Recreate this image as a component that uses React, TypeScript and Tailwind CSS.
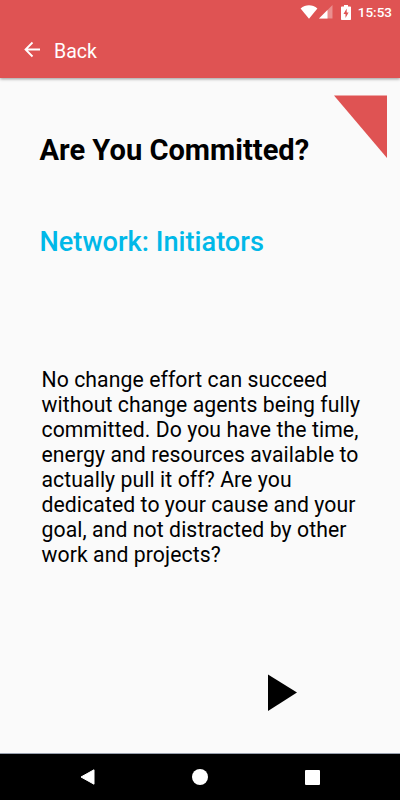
const body = [
  "No change effort can succeed",
  "without change agents being fully",
  "committed. Do you have the time,",
  "energy and resources available to",
  "actually pull it off? Are you",
  "dedicated to your cause and your",
  "goal, and not distracted by other",
  "work and projects?",
];

function StatusBar() {
  return (
    <div className="flex h-6 items-center justify-end pr-2">
      {/* Wifi */}
      <svg width="18" height="14" viewBox="0 0 18 14" className="mr-px">
        <path d="M0.6 3.4C5.5-0.8 12.5-0.8 17.4 3.4L9 13.8z" fill="#fff" />
      </svg>
      {/* Signal */}
      <svg width="14" height="14" viewBox="0 0 14 14" className="mr-2">
        <path d="M0 13.5L13.5 0V13.5z" fill="#fff" fillOpacity="0.35" />
        <path d="M0 13.5L8.5 5V13.5z" fill="#fff" />
      </svg>
      {/* Battery */}
      <svg width="10" height="15" viewBox="0 0 10 15" className="mr-[7px]">
        <path
          d="M3 0h4v1.5h2.2a.8.8 0 0 1 .8.8v11.9a.8.8 0 0 1-.8.8H.8a.8.8 0 0 1-.8-.8V2.3a.8.8 0 0 1 .8-.8H3z"
          fill="#fff"
        />
        <path d="M5.7 3.5L2.5 8.9H4.5V13L7.6 7.5H5.7z" fill="#df5353" />
      </svg>
      <span className="pt-0.5 text-[13.5px] leading-none font-medium">15:53</span>
    </div>
  );
}

function Header() {
  return (
    <header className="h-[78px] bg-[#df5353] text-white shadow-[0_1px_3px_rgba(0,0,0,0.4)]">
      <StatusBar />
      <div className="flex h-[54px] items-center pl-6">
        <svg width="17" height="17" viewBox="0 0 17 17" className="-mt-1">
          <path
            d="M16 8.5H1.8M8.5 1.5L1.5 8.5L8.5 15.5"
            fill="none"
            stroke="#fff"
            strokeWidth="1.8"
          />
        </svg>
        <span className="ml-[13px] pt-px text-[19.5px] leading-6">Back</span>
      </div>
    </header>
  );
}

function NavBar() {
  return (
    <nav className="flex h-[46px] items-center bg-black pl-20">
      <svg width="16" height="16" viewBox="0 0 16 16">
        <path d="M1 8L14 0.8V15.2z" fill="#fff" stroke="#fff" strokeLinejoin="round" />
      </svg>
      <div className="ml-24 size-4 rounded-full bg-white"></div>
      <div className="ml-[97px] size-[15px] rounded-[1px] bg-white"></div>
    </nav>
  );
}

export default function App() {
  return (
    <div className="flex h-[800px] w-[400px] flex-col overflow-hidden bg-[#fafafa] font-['Roboto',sans-serif] text-black">
      <Header />
      <main className="relative flex-1 border-b border-gray-400">
        {/* Corner ribbon */}
        <svg
          width="53"
          height="63"
          viewBox="0 0 53 63"
          className="absolute top-[17px] right-[13px]"
        >
          <path d="M0 0.4H53V63z" fill="#df5353" />
        </svg>
        <h1 className="mt-[54px] ml-[39.5px] text-[29.1px] leading-9 font-bold whitespace-nowrap">
          Are You Committed?
        </h1>
        <h2 className="mt-[56px] ml-[39.5px] text-[27.2px] leading-9 font-medium whitespace-nowrap text-[#00b8e8]">
          Network: Initiators
        </h2>
        <p className="mt-[107px] ml-[41.5px] text-[21.2px] leading-[25px] tracking-[0.08px] whitespace-nowrap">
          {body.map((line) => (
            <span key={line} className="block">
              {line}
            </span>
          ))}
        </p>
        <svg width="30" height="38" viewBox="0 0 30 38" className="mt-[107px] ml-[268px]">
          <path d="M0 0.5L29 18.5L0 37z" fill="#000" />
        </svg>
      </main>
      <NavBar />
    </div>
  );
}
